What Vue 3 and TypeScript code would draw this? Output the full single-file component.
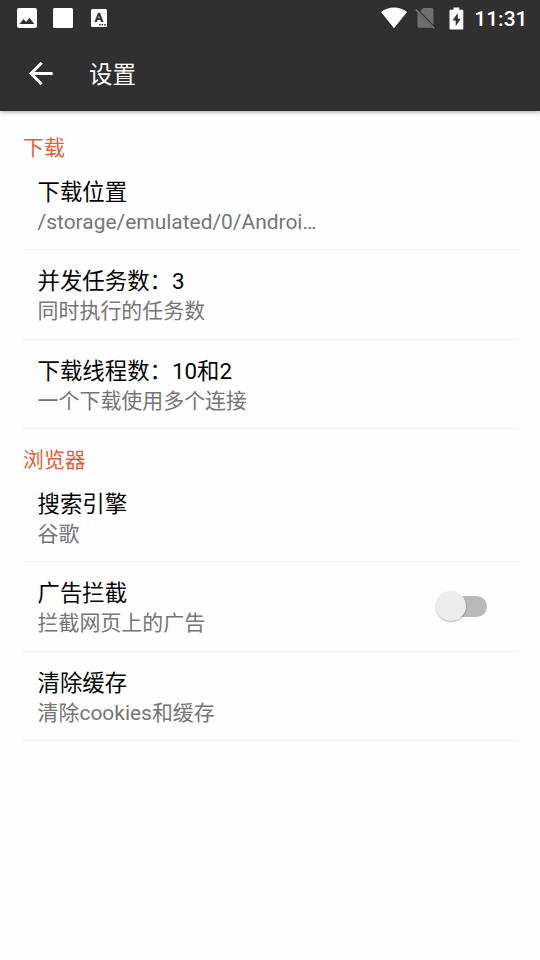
<script setup lang="ts">
interface SettingItem {
  title: string
  summary: string
  toggle?: boolean
}
interface SettingSection {
  name: string
  items: SettingItem[]
}

const sections: SettingSection[] = [
  {
    name: '下载',
    items: [
      { title: '下载位置', summary: '/storage/emulated/0/Androi…' },
      { title: '并发任务数：3', summary: '同时执行的任务数' },
      { title: '下载线程数：10和2', summary: '一个下载使用多个连接' },
    ],
  },
  {
    name: '浏览器',
    items: [
      { title: '搜索引擎', summary: '谷歌' },
      { title: '广告拦截', summary: '拦截网页上的广告', toggle: true },
      { title: '清除缓存', summary: '清除cookies和缓存' },
    ],
  },
]
</script>

<template>
  <div class="screen">
    <header class="top">
      <div class="status">
        <div class="notices">
          <svg width="20" height="20" viewBox="0 0 20 20">
            <path fill="#fff" fill-rule="evenodd" d="M2 0h16a2 2 0 0 1 2 2v16a2 2 0 0 1-2 2H2a2 2 0 0 1-2-2V2a2 2 0 0 1 2-2ZM2.500 16h14.800l-4.800-6.200-3.400 4.100-2.500-2.800Z" />
          </svg>
          <svg width="20" height="20" viewBox="0 0 20 20"><rect width="20" height="20" rx="1.500" fill="#fff" /></svg>
          <div class="badge">
            <span>A</span>
            <svg width="7" height="2" viewBox="0 0 7 2"><path fill="#303030" d="M0 0h1.600v1.600H0ZM2.600 0h1.600v1.600H2.600ZM5.200 0h1.600v1.600H5.200Z" /></svg>
          </div>
        </div>
        <div class="system">
          <svg width="28" height="22" viewBox="0 0 28 22">
            <path fill="#fff" d="M14 21.300 1 5C4.700 2.100 9.200.500 14 .500s9.300 1.600 13 4.500Z" />
          </svg>
          <svg class="sim" width="22" height="22" viewBox="0 0 22 22">
            <path fill="#6f6f6f" d="M8 1H17a1.500 1.500 0 0 1 1.500 1.500V18L5.300 4.200ZM2.500 5.600 17.300 20.800H4A1.500 1.500 0 0 1 2.500 19.300Z" />
            <path stroke="#7b7b7b" stroke-width="1.500" d="m.8 2.500 18.300 18.700" />
          </svg>
          <svg class="battery" width="15" height="23" viewBox="0 0 15 23">
            <path fill="#fff" fill-rule="evenodd" d="M4.500.500h5.800v2.200h2.900c.600 0 1.100.500 1.100 1.100v17.600c0 .600-.500 1.100-1.100 1.100H1.600c-.600 0-1.100-.500-1.100-1.100V3.800c0-.600.500-1.100 1.100-1.100h2.900ZM8.800 6 3.500 13.400h3.200v5.800l5-7.500H8.800Z" />
          </svg>
          <span class="clock">11:31</span>
        </div>
      </div>
      <div class="bar">
        <svg width="26" height="26" viewBox="0 0 26 26" fill="none" stroke="#fff" stroke-width="2.900">
          <path d="M24.600 12.500H3M13.700 1.800 3 12.500l10.700 10.700" />
        </svg>
        <h1>设置</h1>
      </div>
    </header>
    <main>
      <section v-for="section in sections" :key="section.name">
        <h2>{{ section.name }}</h2>
        <div v-for="item in section.items" :key="item.title" class="item">
          <div class="text">
            <div class="title">{{ item.title }}</div>
            <div class="summary">{{ item.summary }}</div>
          </div>
          <div v-if="item.toggle" class="switch"><span class="thumb"></span></div>
        </div>
      </section>
    </main>
  </div>
</template>

<style>
body {
  background: #fefefe;
}
</style>

<style scoped>
.screen {
  height: 960px;
  overflow: hidden;
  background: #fefefe;
  font-family: Roboto, "Noto Sans CJK SC", sans-serif;
}
.top {
  height: 111px;
  background: #303030;
  box-shadow: 0 1px 5px rgba(0, 0, 0, 0.36);
}
.status {
  display: flex;
  justify-content: space-between;
  height: 36px;
  padding: 0 12.500px 0 17px;
}
.notices,
.system {
  display: flex;
  align-items: center;
}
.notices {
  gap: 16px;
}
.badge {
  display: flex;
  flex-direction: column;
  align-items: center;
  box-sizing: border-box;
  width: 16px;
  height: 18px;
  margin-left: 2px;
  padding-top: 2px;
  border-radius: 1.5px;
  background: #fff;
}
.badge span {
  color: #303030;
  font-size: 13px;
  font-weight: 900;
  line-height: 13px;
}
.badge svg {
  align-self: flex-end;
  margin-right: 1px;
}
.sim {
  margin-left: 7px;
}
.battery {
  margin-left: 12px;
}
.clock {
  margin-left: 10px;
  padding-top: 1px;
  color: #fff;
  font-size: 21px;
  font-weight: 500;
  line-height: 36px;
}
.bar {
  display: flex;
  align-items: center;
  height: 75px;
  padding-left: 28px;
}
h1 {
  margin: 2px 0 0 35px;
  color: #fff;
  font-size: 23.500px;
  font-weight: 400;
  line-height: 36px;
}
main {
  padding: 6px 22.500px 0 23px;
}
h2 {
  height: 43.500px;
  margin: 0;
  padding-top: 15.500px;
  box-sizing: border-box;
  color: #df6237;
  font-size: 20.900px;
  font-weight: 400;
  line-height: 30px;
}
.item {
  display: flex;
  align-items: center;
  justify-content: space-between;
  box-sizing: border-box;
  height: 89.500px;
  padding: 0 31px 0 14.600px;
  border-bottom: 1px solid #eee;
}
.text {
  padding-top: 4px;
}
.title,
.summary {
  height: 30px;
  line-height: 30px;
  white-space: nowrap;
}
.title {
  color: #050505;
  font-size: 22.400px;
}
.summary {
  color: #757575;
  font-size: 20.950px;
}
.switch {
  display: flex;
  align-items: center;
  width: 46px;
  height: 21px;
  border-radius: 11px;
  background: #b9b9b9;
}
.thumb {
  flex: none;
  width: 30px;
  height: 30px;
  margin-left: -5px;
  border-radius: 50%;
  background: #ececec;
  box-shadow: 0 1px 2px rgba(0, 0, 0, 0.3);
}
</style>
